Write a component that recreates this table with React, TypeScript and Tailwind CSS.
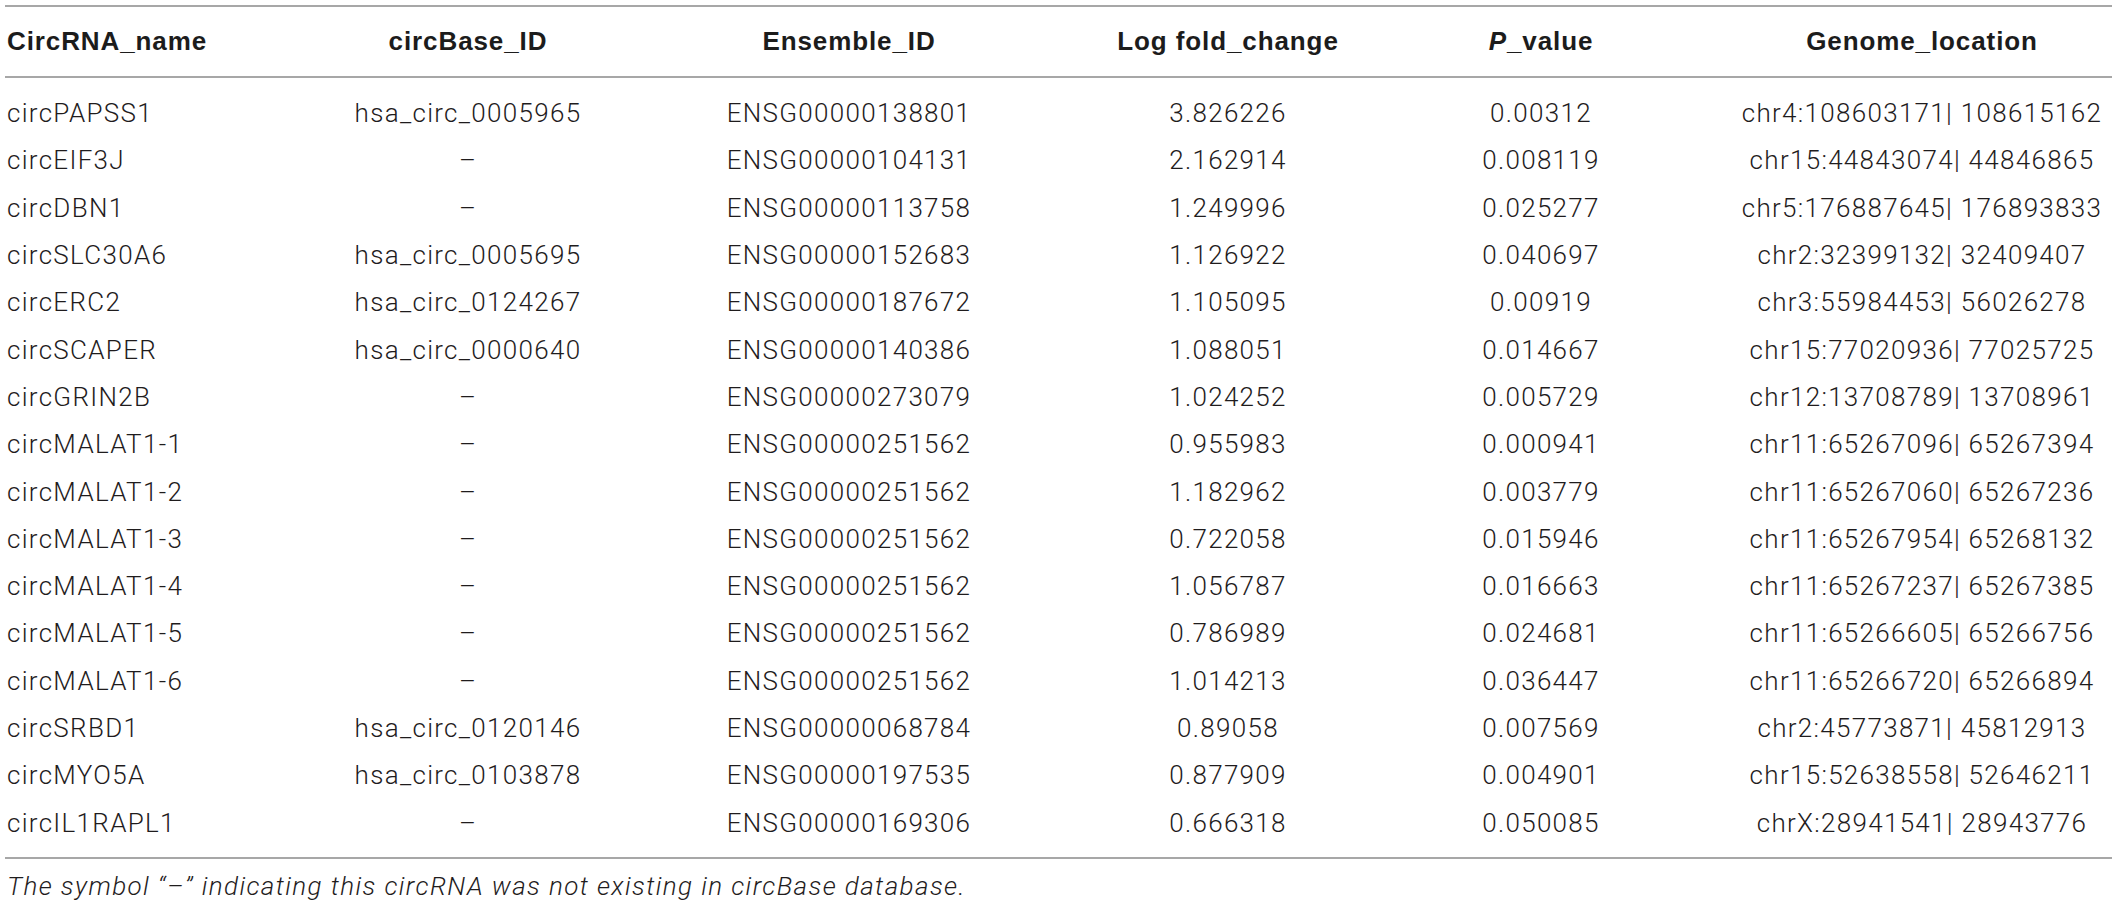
const rows: string[][] = [
  ["circPAPSS1", "hsa_circ_0005965", "ENSG00000138801", "3.826226", "0.00312", "chr4:108603171| 108615162"],
  ["circEIF3J", "–", "ENSG00000104131", "2.162914", "0.008119", "chr15:44843074| 44846865"],
  ["circDBN1", "–", "ENSG00000113758", "1.249996", "0.025277", "chr5:176887645| 176893833"],
  ["circSLC30A6", "hsa_circ_0005695", "ENSG00000152683", "1.126922", "0.040697", "chr2:32399132| 32409407"],
  ["circERC2", "hsa_circ_0124267", "ENSG00000187672", "1.105095", "0.00919", "chr3:55984453| 56026278"],
  ["circSCAPER", "hsa_circ_0000640", "ENSG00000140386", "1.088051", "0.014667", "chr15:77020936| 77025725"],
  ["circGRIN2B", "–", "ENSG00000273079", "1.024252", "0.005729", "chr12:13708789| 13708961"],
  ["circMALAT1-1", "–", "ENSG00000251562", "0.955983", "0.000941", "chr11:65267096| 65267394"],
  ["circMALAT1-2", "–", "ENSG00000251562", "1.182962", "0.003779", "chr11:65267060| 65267236"],
  ["circMALAT1-3", "–", "ENSG00000251562", "0.722058", "0.015946", "chr11:65267954| 65268132"],
  ["circMALAT1-4", "–", "ENSG00000251562", "1.056787", "0.016663", "chr11:65267237| 65267385"],
  ["circMALAT1-5", "–", "ENSG00000251562", "0.786989", "0.024681", "chr11:65266605| 65266756"],
  ["circMALAT1-6", "–", "ENSG00000251562", "1.014213", "0.036447", "chr11:65266720| 65266894"],
  ["circSRBD1", "hsa_circ_0120146", "ENSG00000068784", "0.89058", "0.007569", "chr2:45773871| 45812913"],
  ["circMYO5A", "hsa_circ_0103878", "ENSG00000197535", "0.877909", "0.004901", "chr15:52638558| 52646211"],
  ["circIL1RAPL1", "–", "ENSG00000169306", "0.666318", "0.050085", "chrX:28941541| 28943776"],
];

const grid = "grid grid-cols-[339px_248px_514px_244px_382px_380px] items-center";

export default function App() {
  return (
    <div className="w-[2117px] h-[906px] bg-white pt-[5px] px-[5px] font-['Liberation_Sans',Arial,sans-serif] text-[#1f1c1d]">
      <div className="border-t-2 border-[#a7a7a7]">
        <div className={`${grid} h-[69px] text-[26px] font-bold text-[#1c1c1c] tracking-[0.9px]`}>
          <div className="pl-[2px]">CircRNA_name</div>
          <div className="text-center">circBase_ID</div>
          <div className="text-center">Ensemble_ID</div>
          <div className="text-center">Log fold_change</div>
          <div className="text-center">
            <span className="italic">P</span>_value
          </div>
          <div className="text-center">Genome_location</div>
        </div>
      </div>

      <div className="border-t-2 border-b-2 border-[#a7a7a7] pt-[12px] pb-[10px] font-['Roboto',sans-serif] font-light text-[26px] tracking-[1.3px]">
        {rows.map((r) => (
          <div key={r[0]} className={`${grid} h-[47.3px]`}>
            <div className="pl-[2px]">{r[0]}</div>
            <div className="text-center">{r[1]}</div>
            <div className="text-center">{r[2]}</div>
            <div className="text-center">{r[3]}</div>
            <div className="text-center">{r[4]}</div>
            <div className="text-center">{r[5]}</div>
          </div>
        ))}
      </div>

      <p className="pt-[8px] pl-[2px] font-['Roboto',sans-serif] font-light italic text-[26px] tracking-[1.4px]">
        The symbol “–” indicating this circRNA was not existing in circBase database.
      </p>
    </div>
  );
}
